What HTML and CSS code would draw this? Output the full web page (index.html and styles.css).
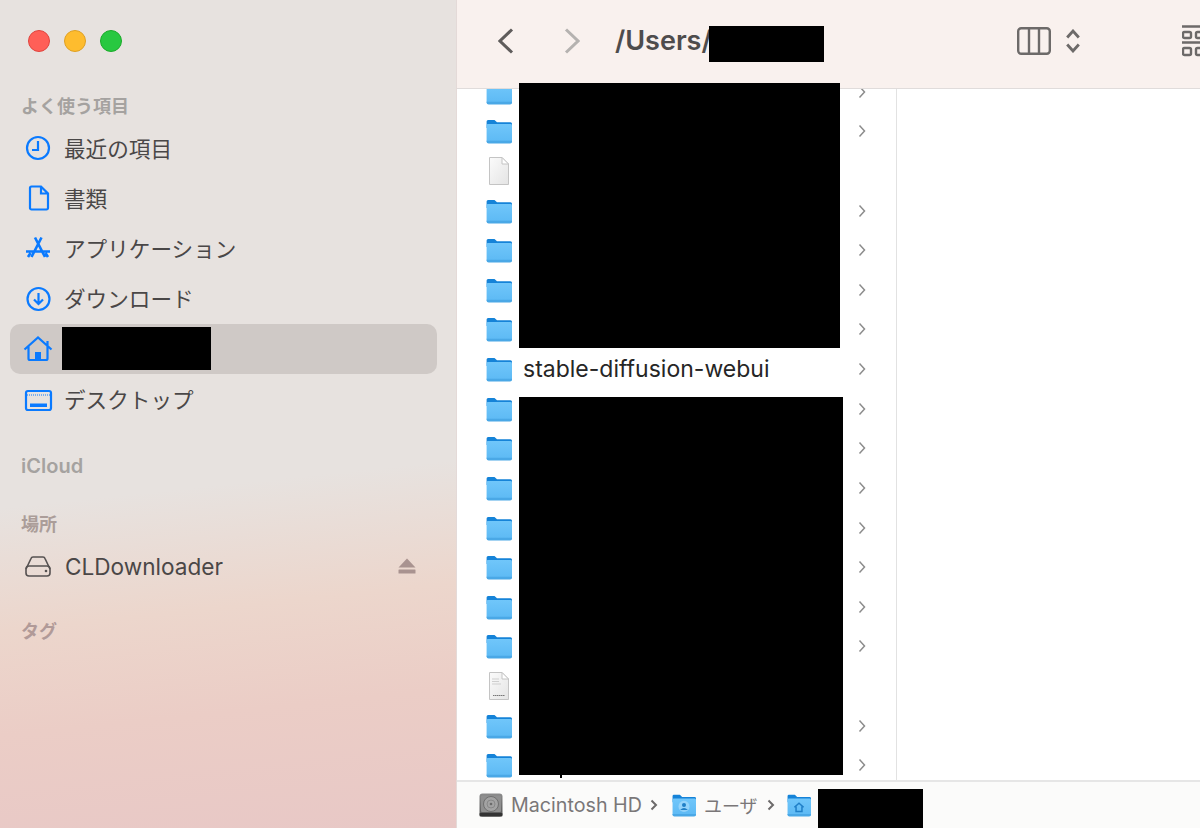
FILE: index.html
```html
<!DOCTYPE html>
<html lang="ja">
<head>
<meta charset="utf-8">
<title>Finder</title>
<link rel="stylesheet" href="styles.css">
</head>
<body>
<svg class="defs" width="0" height="0" aria-hidden="true">
  <defs>
    <linearGradient id="fbody" x1="0" y1="0" x2="0" y2="1">
      <stop offset="0" stop-color="#70c6fa"/>
      <stop offset="1" stop-color="#5cb9f4"/>
    </linearGradient>
    <linearGradient id="fpage" x1="0" y1="0" x2="1" y2="1">
      <stop offset="0" stop-color="#fbfbfb"/>
      <stop offset="1" stop-color="#e4e4e4"/>
    </linearGradient>
    <linearGradient id="disk" x1="0" y1="0" x2="0" y2="1">
      <stop offset="0" stop-color="#8c8c8c"/>
      <stop offset="1" stop-color="#555"/>
    </linearGradient>
    <symbol id="folder" viewBox="0 0 26 26">
      <path d="M0.600 3.500A1.500 1.500 0 0 1 2.100 2H8.500L11 4.200H24.500A1.500 1.500 0 0 1 26 5.700V10H0.600Z" fill="#1583d8"/>
      <path d="M0.600 7.400Q0.600 6 2 6H24.500Q26 6 26 7.400V23Q26 25 24 25H2.600Q0.600 25 0.600 23Z" fill="url(#fbody)"/>
      <path d="M0.600 22.800H26V23.400Q26 25.400 24 25.400H2.600Q0.600 25.400 0.600 23.400Z" fill="#4aa8e6"/>
    </symbol>
    <symbol id="page" viewBox="0 0 22 30">
      <path d="M1.500 1.500H14L20.500 8V28.500H1.500Z" fill="url(#fpage)" stroke="#c4c4c4"/>
      <path d="M14 1.500V8H20.500Z" fill="#fff" stroke="#c4c4c4"/>
    </symbol>
    <symbol id="chev" viewBox="0 0 8 14">
      <path d="M1.500 1.500L6.500 7L1.500 12.500" fill="none" stroke="currentColor" stroke-width="1.500"/>
    </symbol>
  </defs>
</svg>
<div class="window">
  <aside class="sidebar">
    <div class="lights">
      <span class="light red"></span>
      <span class="light yellow"></span>
      <span class="light green"></span>
    </div>
    <div class="label first">よく使う項目</div>
    <div class="item">
      <svg class="ico" viewBox="0 0 30 30"><circle cx="15" cy="15" r="11"/><path d="M15 8V17H9"/></svg>
      <span class="jp">最近の項目</span>
    </div>
    <div class="item">
      <svg class="ico" viewBox="0 0 30 30"><path d="M8.500 3.500H18L25 10.500V25A1.500 1.500 0 0 1 23.500 26.500H8.500A1.500 1.500 0 0 1 7 25V5A1.500 1.500 0 0 1 8.500 3.500ZM18 3.500V10.500H25"/></svg>
      <span class="jp">書類</span>
    </div>
    <div class="item">
      <svg class="ico ico-app" viewBox="0 0 30 30"><path d="M12 4.500L22 24M18.500 4.500L8.500 24M3 18.500H27M5 24L7.500 20M25 24L22.500 20"/></svg>
      <span class="jp">アプリケーション</span>
    </div>
    <div class="item">
      <svg class="ico" viewBox="0 0 30 30"><circle cx="15.500" cy="15" r="11"/><path d="M15.500 9V20M11 15.500L15.500 20L20 15.500"/></svg>
      <span class="jp">ダウンロード</span>
    </div>
    <div class="item selected">
      <svg class="ico" viewBox="0 0 30 30"><path d="M1.500 15.500L15 3.500L28.500 15.500M24.500 7V12M5.500 12.500V24.500A1.500 1.500 0 0 0 7 26H23A1.500 1.500 0 0 0 24.500 24.500V12.500"/><rect class="fill" x="12" y="18" width="6" height="8"/></svg>
    </div>
    <div class="item">
      <svg class="ico" viewBox="0 0 30 30"><rect x="3" y="7" width="25" height="19" rx="2"/><path class="thin" d="M4 11H27"/><rect class="fill" x="7" y="19.500" width="17" height="3.500"/></svg>
      <span class="jp">デスクトップ</span>
    </div>
    <div class="label icloud">iCloud</div>
    <div class="label places">場所</div>
    <div class="item">
      <svg class="ico ico-drive" viewBox="0 0 30 30"><path d="M3 18L8 7.500Q8.500 6 10 6H20Q21.500 6 22 7.500L27 18"/><rect x="3" y="15" width="24" height="10" rx="3"/><circle class="dot" cx="23" cy="20" r="1.300"/></svg>
      <span class="latin">CLDownloader</span>
      <svg class="eject" viewBox="0 0 18 16"><path d="M9 0.500L17.500 9.500H0.500Z"/><rect x="0.500" y="11.500" width="17" height="4" rx="0.500"/></svg>
    </div>
    <div class="label tags">タグ</div>
  </aside>
  <main class="main">
    <header class="toolbar">
      <svg class="nav back" viewBox="0 0 16 26"><path d="M14 1.500L2 13L14 24.500"/></svg>
      <svg class="nav forward" viewBox="0 0 16 26"><path d="M2 1.500L14 13L2 24.500"/></svg>
      <div class="path">/Users/</div>
      <svg class="columns" viewBox="0 0 34 28"><rect x="1.200" y="1.200" width="31.600" height="25.600" rx="3"/><path d="M12 1.200V26.800M22 1.200V26.800"/></svg>
      <svg class="updown" viewBox="0 0 14 24"><path d="M1.200 8.500L7 2L12.800 8.500M1.200 15.500L7 22L12.800 15.500"/></svg>
      <svg class="grid" viewBox="0 0 40 32"><path d="M0 1.500H40M0 17.500H40"/><rect x="1" y="7" width="8" height="6" rx="1.500"/><rect x="14" y="7" width="8" height="6" rx="1.500"/><rect x="1" y="23" width="8" height="7" rx="1.500"/><rect x="14" y="23" width="8" height="7" rx="1.500"/></svg>
    </header>
    <div class="browser">
      <div class="column">
        <div class="rows">
          <div class="row"><svg class="fold"><use href="#folder"/></svg><span class="name"></span><svg class="more"><use href="#chev"/></svg></div>
          <div class="row"><svg class="fold"><use href="#folder"/></svg><span class="name"></span><svg class="more"><use href="#chev"/></svg></div>
          <div class="row"><svg class="file"><use href="#page"/></svg><span class="name"></span></div>
          <div class="row"><svg class="fold"><use href="#folder"/></svg><span class="name"></span><svg class="more"><use href="#chev"/></svg></div>
          <div class="row"><svg class="fold"><use href="#folder"/></svg><span class="name"></span><svg class="more"><use href="#chev"/></svg></div>
          <div class="row"><svg class="fold"><use href="#folder"/></svg><span class="name"></span><svg class="more"><use href="#chev"/></svg></div>
          <div class="row"><svg class="fold"><use href="#folder"/></svg><span class="name"></span><svg class="more"><use href="#chev"/></svg></div>
          <div class="row"><svg class="fold"><use href="#folder"/></svg><span class="name">stable-diffusion-webui</span><svg class="more"><use href="#chev"/></svg></div>
          <div class="row"><svg class="fold"><use href="#folder"/></svg><span class="name"></span><svg class="more"><use href="#chev"/></svg></div>
          <div class="row"><svg class="fold"><use href="#folder"/></svg><span class="name"></span><svg class="more"><use href="#chev"/></svg></div>
          <div class="row"><svg class="fold"><use href="#folder"/></svg><span class="name"></span><svg class="more"><use href="#chev"/></svg></div>
          <div class="row"><svg class="fold"><use href="#folder"/></svg><span class="name"></span><svg class="more"><use href="#chev"/></svg></div>
          <div class="row"><svg class="fold"><use href="#folder"/></svg><span class="name"></span><svg class="more"><use href="#chev"/></svg></div>
          <div class="row"><svg class="fold"><use href="#folder"/></svg><span class="name"></span><svg class="more"><use href="#chev"/></svg></div>
          <div class="row"><svg class="fold"><use href="#folder"/></svg><span class="name"></span><svg class="more"><use href="#chev"/></svg></div>
          <div class="row">
            <svg class="file" viewBox="0 0 22 30"><use href="#page" width="22" height="30"/><path class="doclines" d="M4 8H11M4 10.500H11M4 13H13"/><path class="docword" d="M5 24.500H17"/></svg>
            <span class="name"></span>
          </div>
          <div class="row"><svg class="fold"><use href="#folder"/></svg><span class="name"></span><svg class="more"><use href="#chev"/></svg></div>
          <div class="row"><svg class="fold"><use href="#folder"/></svg><span class="name"></span><svg class="more"><use href="#chev"/></svg></div>
        </div>
      </div>
      <div class="preview"></div>
    </div>
    <footer class="status">
      <svg class="crumb-ico" viewBox="0 0 24 24">
        <rect x="0.500" y="0.500" width="23" height="23" rx="3" fill="url(#disk)"/>
        <rect x="2" y="2.500" width="20" height="16.500" rx="1" fill="#8f8f8f"/>
        <circle cx="12" cy="11" r="7.500" fill="#a3a3a3" stroke="#6f6f6f"/>
        <circle cx="12" cy="11" r="4" fill="none" stroke="#888"/>
        <circle cx="12" cy="11" r="1.300" fill="#6a6a6a"/>
        <rect x="0.500" y="20" width="23" height="3.500" rx="1" fill="#333"/>
      </svg>
      <span class="crumb">Macintosh HD</span>
      <svg class="sep" viewBox="0 0 8 12"><path d="M1.500 1.500L6 6L1.500 10.500"/></svg>
      <svg class="crumb-ico" viewBox="0 0 26 26">
        <use href="#folder" width="26" height="26"/>
        <circle class="badge" cx="13" cy="14.500" r="6"/>
        <circle class="badge-in" cx="13" cy="13" r="2.200"/>
        <path class="badge-in" d="M8.800 18.500Q13 13.800 17.200 18.500Z"/>
      </svg>
      <span class="crumb crumb-jp">ユーザ</span>
      <svg class="sep sep-last" viewBox="0 0 8 12"><path d="M1.500 1.500L6 6L1.500 10.500"/></svg>
      <svg class="crumb-ico" viewBox="0 0 26 26">
        <use href="#folder" width="26" height="26"/>
        <path class="house" d="M8 15.500L13 11L18 15.500M9.800 14.500V20H16.200V14.500"/>
      </svg>
    </footer>
  </main>
  <div class="mask mask-user"></div>
  <div class="mask mask-title"></div>
  <div class="mask mask-top"></div>
  <div class="mask mask-bottom"></div>
  <div class="mask mask-speck"></div>
  <div class="mask mask-crumb"></div>
</div>
</body>
</html>
```
FILE: styles.css
```css
* { box-sizing: border-box; }
html, body { margin: 0; height: 100%; }
body { overflow: hidden; background: #fff; font-family: Inter, "Noto Sans CJK JP", sans-serif; }
.defs { position: absolute; }

.window { position: relative; display: flex; width: 1200px; height: 828px; overflow: hidden; }

/* Sidebar */
.sidebar {
  width: 456px; flex: none; padding-top: 30px;
  background: linear-gradient(174deg, #e7e2df 0, #e7e2df 58%, #ecd6cc 72%, #ebcdc6 84%, #e8c8c6 100%);
  color: #4a4747;
}
.lights { display: flex; gap: 14px; padding-left: 28px; }
.light { width: 22px; height: 22px; border-radius: 50%; }
.red { background: #ff5f57; border: 1px solid #e0443e; }
.yellow { background: #febc2e; border: 1px solid #dfa023; }
.green { background: #28c840; border: 1px solid #1aab29; }

.label { height: 24px; line-height: 24px; padding-left: 21px; font-size: 18px; font-weight: 600; color: #a5a2a0; }
.label.first { margin-top: 43px; margin-bottom: 4px; }
.label.icloud { margin-top: 30px; font-size: 20px; padding-left: 21px; }
.label.places { margin-top: 35px; margin-bottom: 4px; color: #ab9d99; }
.label.tags { margin-top: 29px; color: #b19a98; }

.item { position: relative; display: flex; align-items: center; gap: 12px; height: 50.200px; margin-right: 19px; margin-left: 10px; padding-left: 13px; }
.item.selected { background: #cfc9c6; border-radius: 10px; }
.jp { margin-left: -1px; padding-bottom: 2px; font-size: 21.600px; }
.latin { font-size: 22.600px; }
.ico { width: 30px; height: 30px; flex: none; fill: none; stroke: #0a7aff; stroke-width: 2.200; }
.ico .fill { fill: #0a7aff; stroke: none; }
.ico .thin { stroke-width: 1; stroke-dasharray: 1 1; }
.ico-app { stroke-width: 2.600; }
.ico-drive { stroke: #555151; stroke-width: 1.600; }
.ico-drive .dot { fill: #555151; stroke: none; }
.eject { position: absolute; left: 388px; top: 17px; width: 18px; height: 16px; fill: #a99390; }

/* Main */
.main { flex: 1; display: flex; flex-direction: column; min-width: 0; border-left: 1px solid #e4dad8; }
.toolbar { display: flex; align-items: center; height: 89px; flex: none; padding: 0 0 7px 41px; overflow: hidden; background: #f9f1ee; border-bottom: 1px solid #e0dcdb; }
.nav { width: 16px; height: 26px; flex: none; fill: none; stroke-width: 3; }
.back { stroke: #5f5c5b; }
.forward { stroke: #b5b2b0; margin-left: 50px; }
.path { width: 402px; flex: none; margin-left: 35px; font-size: 27px; font-weight: 600; color: #4e4c4c; white-space: nowrap; }
.columns { width: 34px; height: 28px; flex: none; fill: none; stroke: #6d6a69; stroke-width: 2.400; }
.updown { width: 14px; height: 24px; flex: none; margin-left: 15px; fill: none; stroke: #6d6a69; stroke-width: 2.800; }
.grid { width: 40px; height: 32px; flex: none; margin-left: 102px; fill: none; stroke: #6d6a69; stroke-width: 2.400; }

.browser { flex: 1; display: flex; min-height: 0; overflow: hidden; }
.column { width: 440px; flex: none; overflow: hidden; border-right: 1px solid #e2e2e2; background: #fff; }
.preview { flex: 1; background: #fff; }
.rows { margin-top: -17px; }
.row { display: flex; align-items: center; height: 39.620px; padding-left: 29px; color: #262626; font-size: 23px; }
.fold { width: 26px; height: 26px; flex: none; }
.file { width: 22px; height: 30px; flex: none; margin: 0 2px; }
.name { flex: 1; margin-left: 11px; white-space: nowrap; }
.more { width: 8px; height: 14px; flex: none; margin-right: 30px; color: #8c8c8c; }
.doclines { fill: none; stroke: #cfcfcf; stroke-width: 1; }
.docword { fill: none; stroke: #777; stroke-width: 1.200; stroke-dasharray: 1.500 0.500; }

.status { display: flex; align-items: center; height: 48px; flex: none; padding: 0 0 0 22px; background: #fbfbfa; border-top: 2px solid #e6e6e6; color: #7a7778; font-size: 19.700px; }
.crumb-ico { width: 24px; height: 24px; flex: none; }
.crumb { margin-left: 8px; white-space: nowrap; }
.crumb-jp { width: 53px; flex: none; margin-left: 8px; font-size: 18px; }
.sep { width: 8px; height: 12px; flex: none; margin: 0 14px 0 8px; fill: none; stroke: #6c6a6a; stroke-width: 2; }
.sep-last { margin: 0 12px 0 10px; }
.badge { fill: #a7dcfc; opacity: 0.7; }
.badge-in { fill: #1f7fc7; }
.house { fill: none; stroke: #1f7fc7; stroke-width: 1.600; }

/* Redactions lying over the content */
.mask { position: absolute; background: #000; }
.mask-user { left: 62px; top: 327px; width: 149px; height: 43px; }
.mask-title { left: 709px; top: 26px; width: 115px; height: 36px; }
.mask-top { left: 519px; top: 83px; width: 321px; height: 265px; }
.mask-bottom { left: 519px; top: 397px; width: 324px; height: 378px; }
.mask-speck { left: 560px; top: 775px; width: 2px; height: 3px; }
.mask-crumb { left: 818px; top: 789px; width: 105px; height: 39px; }
```
